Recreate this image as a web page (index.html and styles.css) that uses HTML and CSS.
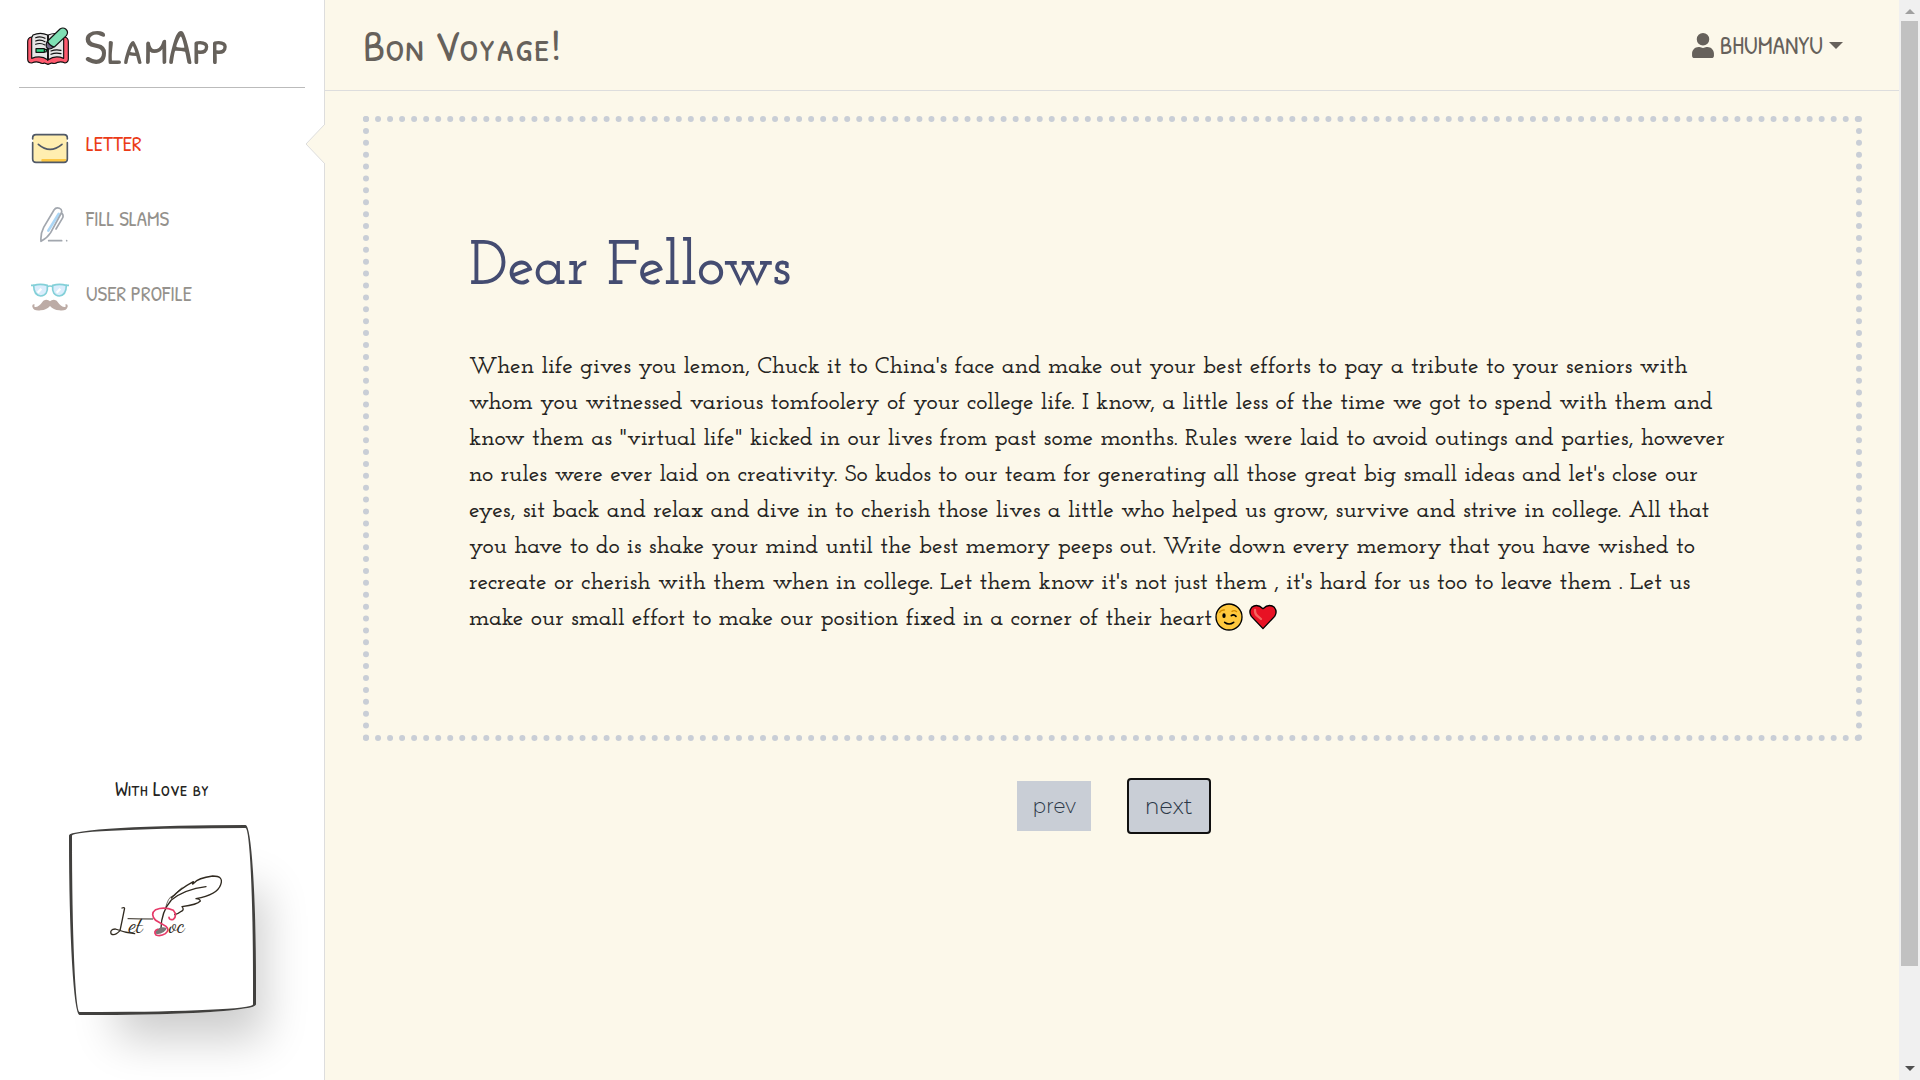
FILE: index.html
```html
<!DOCTYPE html>
<html lang="en">
<head>
<meta charset="utf-8">
<meta name="viewport" content="width=device-width, initial-scale=1">
<title>SlamApp</title>
<link rel="stylesheet" href="styles.css">
</head>
<body>
<div class="app">
  <aside class="sidebar">
    <a class="brand" href="#">
      <svg class="brand-icon" viewBox="0 0 126 114" aria-hidden="true">
        <g stroke="#111" stroke-width="3.5" stroke-linejoin="round" stroke-linecap="round">
          <path d="M14 30Q2 32 2 44V96Q2 108 14 108Q26 103 36 106Q46 112 52 108L63 112L74 108Q84 112 92 106Q104 103 114 108Q124 106 124 96V44Q124 32 112 30Z" fill="#ff5a6e"/>
          <path d="M18 24Q40 14 62 24V98Q42 84 14 94V32Z" fill="#e6e6e6"/>
          <path d="M64 24Q86 14 110 26V94Q84 84 64 98Z" fill="#e6e6e6"/>
          <path d="M26 32Q40 26 54 34M26 42Q40 36 54 44M26 52Q40 46 54 54M72 82Q86 76 102 80M72 72Q86 66 102 70M76 34L90 30M62 84V100" fill="none"/>
          <path d="M27 65H52V76H27ZM52 67H60L57 75H52Z" fill="#32d583"/>
          <path d="M60 44L80 60Q66 72 58 60Q56 52 60 44Z" fill="#6f6684"/>
          <path d="M62 42L99 6Q108 0 116 6Q126 14 118 26L82 60Q66 56 62 42Z" fill="#7fe0b4"/>
        </g>
      </svg>
      <span>SlamApp</span>
    </a>
    <nav class="menu">
      <a class="menu-item active" href="#">
        <svg class="menu-icon" viewBox="0 0 114 108" aria-hidden="true">
          <rect x="6" y="9" width="102" height="84" rx="10" fill="#ffeeb0"/>
          <path d="M32 81H106V84Q104 92 96 92H38Q28 91 32 81Z" fill="#fcc643"/>
          <path d="M5 21V18Q5 8 15 8H99Q109 8 109 18V21M5 32V81Q5 91 15 91H99Q109 91 109 81V32M22 37Q57 67 93 37" fill="none" stroke="#505967" stroke-width="5" stroke-linecap="round"/>
        </svg>
        <span>LETTER</span>
        <svg class="menu-notch" viewBox="0 0 20 40" aria-hidden="true"><path d="M20 0L1 20L20 40" fill="#fcf8ea" stroke="#ddd"/></svg>
      </a>
      <a class="menu-item" href="#">
        <svg class="menu-icon" viewBox="0 0 114 108" aria-hidden="true">
          <g fill="none" stroke-linecap="round" stroke-linejoin="round" stroke-width="5">
            <path d="M83 21L52 71" stroke="#8ac7f3" stroke-width="8"/>
            <path d="M30 103Q28 80 38 61L69 9Q75 0 85 4Q95 8 91 18L59 77Q48 94 30 103ZM93 19Q99 26 94 34L75 66M53 101H92M107 101V101" stroke="#7b828d"/>
          </g>
        </svg>
        <span>FILL SLAMS</span>
      </a>
      <a class="menu-item" href="#">
        <svg class="menu-icon" viewBox="0 8 114 108" aria-hidden="true">
          <g fill="#cbe6fc" stroke="#50bdc8" stroke-width="5">
            <path d="M8 18Q28 12 49 18Q52 49 29 50Q8 48 8 18ZM65 18Q86 12 106 18Q106 48 85 50Q62 49 65 18Z"/>
            <path d="M0 18H10M48 22Q57 18 66 22M104 18H114" fill="none"/>
          </g>
          <path d="M20 40L31 28M77 40L88 28" stroke="#fff" stroke-width="7"/>
          <path d="M57 66Q65 58 77 64Q91 84 102 83Q107 81 102 76Q111 72 110 82Q106 96 85 93Q67 92 57 80Q47 92 29 93Q8 96 4 82Q3 72 12 76Q7 81 12 83Q23 84 37 64Q49 58 57 66Z" fill="#a1887f"/>
        </svg>
        <span>USER PROFILE</span>
      </a>
    </nav>
    <footer class="credit">
      <p class="credit-text">With Love by</p>
      <div class="credit-card">
        <svg class="credit-logo" viewBox="-7 0 450 360" role="img" aria-label="Let Soc">
          <g fill="none" stroke="#302a20" stroke-width="4" stroke-linecap="round" stroke-linejoin="round">
            <path d="M215 205Q216 155 246 120Q286 88 350 80M246 114Q270 88 312 65Q306 77 314 69Q326 54 370 48Q404 48 394 74Q384 104 320 116Q332 117 333 123Q324 134 278 140Q286 149 276 154Q266 162 256 164" />
            <path d="M228 146Q236 112 249 108L257 106Q262 94 278 83" stroke-width="2"/>
            <path d="M116 176Q145 177 190 177" stroke-width="3"/>
            <path d="M98 144Q108 140 105 149Q98 184 92 212Q75 230 65 221Q61 208 78 207Q105 218 136 221"/>
          </g>
          <text class="logo-script" x="118" y="217">et</text>
          <path d="M197 217Q210 196 232 204Q229 219 202 223Z" fill="#777"/>
          <path d="M239 172Q239 181 252 178Q265 167 252 151Q225 139 199 149Q181 162 199 181L230 199Q242 210 228 221Q214 230 200 225Q191 214 205 208" fill="none" stroke="#e63a68" stroke-width="5" stroke-linecap="round"/>
          <text class="logo-script" x="239" y="217">oc</text>
        </svg>
      </div>
    </footer>
  </aside>

  <main class="main">
    <header class="topbar">
      <h1 class="page-title">Bon Voyage!</h1>
      <button class="user" type="button">
        <svg class="user-icon" viewBox="0 0 448 512" aria-hidden="true"><path fill="currentColor" d="M224 256A128 128 0 1 0 224 0a128 128 0 0 0 0 256zm90 32h-17a174 174 0 0 1-146 0h-17C60 288 0 348 0 422v42c0 27 21 48 48 48h352c27 0 48-21 48-48v-42c0-74-60-134-134-134z"/></svg>
        <span>BHUMANYU</span>
        <i class="caret"></i>
      </button>
    </header>
    <article class="letter">
      <h2 class="letter-title">Dear Fellows</h2>
      <p class="letter-text">When life gives you lemon, Chuck it to China's face and make out your best efforts to pay a tribute to your seniors with whom you witnessed various tomfoolery of your college life. I know, a little less of the time we got to spend with them and know them as "virtual life" kicked in our lives from past some months. Rules were laid to avoid outings and parties, however no rules were ever laid on creativity. So kudos to our team for generating all those great big small ideas and let's close our eyes, sit back and relax and dive in to cherish those lives a little who helped us grow, survive and strive in college. All that you have to do is shake your mind until the best memory peeps out. Write down every memory that you have wished to recreate or cherish with them when in college. Let them know it's not just them , it's hard for us too to leave them . Let us make our small effort to make our position fixed in a corner of their heart<svg class="emoji" viewBox="0 0 84 84" role="img" aria-label="winking face">
          <circle cx="42" cy="42" r="39" fill="#ffc83d" stroke="#000" stroke-width="4"/>
          <ellipse cx="27" cy="38" rx="5" ry="7" fill="#000"/>
          <path d="M49 38Q56 32 63 40M29 58Q42 68 56 58" fill="none" stroke="#000" stroke-width="5" stroke-linecap="round"/>
          <path d="M14 28Q18 20 28 21M51 25Q58 20 65 26" fill="none" stroke="#d48c00" stroke-width="4" stroke-linecap="round"/>
        </svg><svg class="emoji" viewBox="0 0 84 84" role="img" aria-label="red heart">
          <path d="M42 77L7 40Q-2 26 8 13Q24 0 42 17Q60 0 76 13Q86 26 77 40Z" fill="#e81224" stroke="#000" stroke-width="4" stroke-linejoin="round"/>
          <path d="M18 21Q17 33 27 40L36 48" fill="none" stroke="#f4655f" stroke-width="7" stroke-linecap="round"/>
        </svg></p>
    </article>
    <div class="pager">
      <button class="pager-btn" type="button">prev</button>
      <button class="pager-btn focused" type="button">next</button>
    </div>
  </main>

  <div class="scrollbar" aria-hidden="true">
    <i class="arrow up"></i>
    <div class="track"><div class="thumb"></div></div>
    <i class="arrow down"></i>
  </div>
</div>
</body>
</html>
```
FILE: styles.css
```css
* { box-sizing: border-box; }

body {
  margin: 0;
  background: #fcf8ea;
  color: #252422;
  font-family: "Patrick Hand SC", "Liberation Sans Narrow", Lato, sans-serif;
}

h1, h2, p { margin: 0; font-weight: 400; }
a { color: inherit; text-decoration: none; }
button { border: 0; background: none; font: inherit; color: inherit; cursor: pointer; }

.app { display: flex; min-height: 100vh; }

/* Sidebar */
.sidebar {
  display: flex;
  flex-direction: column;
  flex: 0 0 325px;
  padding: 0 19px 65px;
  border-right: 1px solid #ddd;
  background: #fff;
}

.brand {
  display: flex;
  align-items: center;
  gap: 15px;
  height: 88px;
  padding: 4px 8px 0;
  border-bottom: 1px solid #bbb;
  color: #66615b;
  font-size: 50px;
  line-height: 60px;
}
.brand-icon { width: 42px; height: 38px; }

.menu { display: flex; flex-direction: column; padding-top: 18px; }
.menu-item {
  position: relative;
  display: flex;
  align-items: center;
  gap: 17px;
  height: 75px;
  padding-left: 12px;
  color: #94918c;
  font-size: 21px;
}
.menu-icon { width: 38px; height: 36px; margin-top: 12px; opacity: 0.7; }
.menu-item.active { color: #eb3b17; }
.active .menu-icon { opacity: 1; }
.menu-notch { position: absolute; top: 18px; right: -20px; width: 20px; height: 40px; }

.credit {
  display: flex;
  flex-direction: column;
  align-items: center;
  gap: 24px;
  margin-top: auto;
}
.credit-text { font-size: 21px; line-height: 24px; }
.credit-card {
  display: flex;
  align-items: center;
  justify-content: center;
  width: 187px;
  height: 190px;
  border: 3px solid #41403e;
  border-radius: 255px 15px 225px 15px / 15px 225px 15px 255px;
  box-shadow: 28px 44px 42px -20px rgba(0, 0, 0, 0.2);
}
.credit-logo { width: 150px; height: 120px; }
.logo-script { fill: #302a20; font: 68px "Dancing Script", "Great Vibes", "Liberation Serif", cursive; }

/* Main column */
.main { flex: 1; min-width: 0; }

.topbar {
  display: flex;
  align-items: center;
  justify-content: space-between;
  height: 91px;
  padding: 0 56px 0 38px;
  border-bottom: 1px solid #ddd;
  color: #66615b;
}
.page-title { font-size: 44px; }
.user { display: flex; align-items: center; gap: 6px; padding: 0; font-size: 25px; }
.user-icon { width: 22px; height: 25px; }
.caret {
  border: 7px solid transparent;
  border-top-color: currentColor;
  border-bottom: 0;
}

.letter {
  margin: 25px 37px 0 38px;
  padding: 109px 0 98px 100px;
  border: 6px dotted #c9ced6;
}
.letter-title {
  color: #444c71;
  font: 600 61px/76px "Josefin Slab", "Liberation Serif", serif;
}
.letter-text {
  margin-top: 42px;
  padding-right: 122px;
  font: 600 24px/36px "Josefin Slab", "Liberation Serif", serif;
}
.emoji { width: 28px; height: 28px; margin: 0 3px; vertical-align: -6px; }

.pager {
  display: flex;
  align-items: center;
  justify-content: center;
  gap: 36px;
  margin-top: 37px;
  padding-left: 4px;
}
.pager-btn {
  height: 50px;
  padding: 0 15px;
  background: #c9ced6;
  color: #2c3848;
  font: 300 20px "Montserrat", "Open Sans", sans-serif;
}
.pager-btn.focused {
  height: 56px;
  padding: 0 16px;
  border: 2px solid #101010;
  border-radius: 4px;
  font-size: 22px;
}

/* Scroll bar */
.scrollbar {
  display: flex;
  flex-direction: column;
  align-items: center;
  flex: 0 0 21px;
  background: #f0f0f0;
}
.track { flex: 1; width: 17px; }
.thumb { height: 91%; background: #c1c1c1; }
.arrow { height: 5px; border: 5px solid transparent; }
.up { margin: 9px 0 7px; border-top: 0; border-bottom-color: #a0a0a0; }
.down { margin: 7px 0 9px; border-bottom: 0; border-top-color: #505050; }
```
